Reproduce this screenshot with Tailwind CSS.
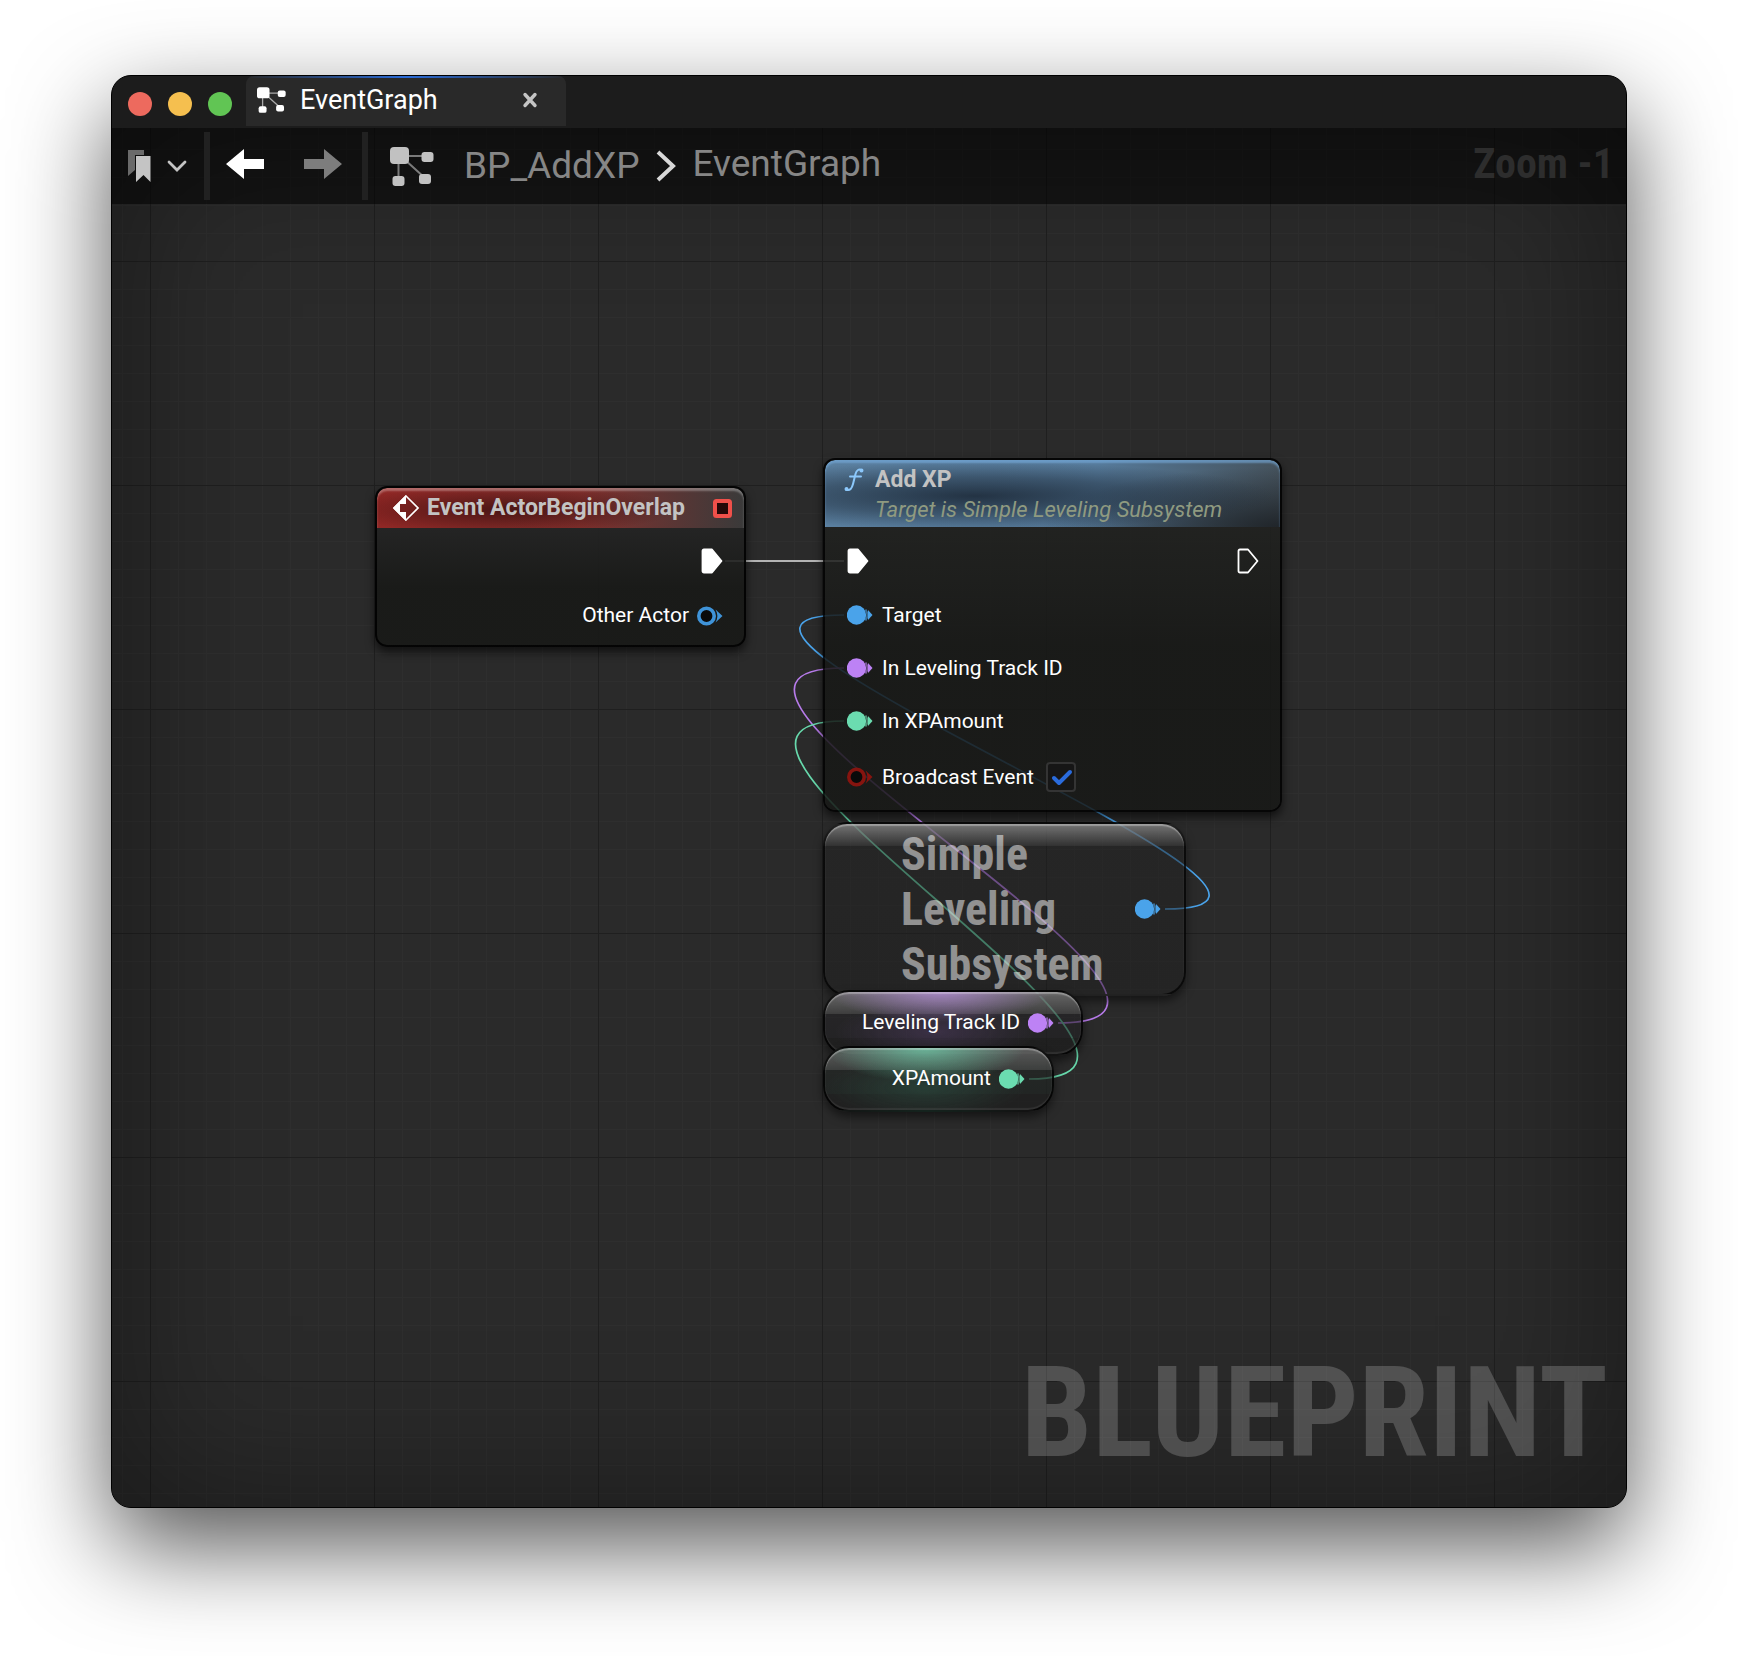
<!DOCTYPE html>
<html lang="en">
<head>
<meta charset="utf-8">
<title>EventGraph</title>
<script src="https://cdn.jsdelivr.net/npm/@tailwindcss/browser@4"></script>
</head>
<body class="bg-white font-[Roboto,sans-serif] text-white">
<!-- shared shapes -->
<svg class="hidden" aria-hidden="true">
  <symbol id="graph" viewBox="0 0 44 39">
    <path d="M12 9H36M8.500 12V32M14 12L35 31" stroke="currentColor" stroke-opacity=".6" stroke-width="2" fill="none"/>
    <rect x="0" y="0" width="19" height="17" rx="4" fill="currentColor"/>
    <rect x="31.500" y="5" width="12" height="10" rx="3" fill="currentColor"/>
    <rect x="2.500" y="29" width="12" height="10" rx="3" fill="currentColor"/>
    <rect x="29" y="27" width="12" height="10" rx="3" fill="currentColor"/>
  </symbol>
  <symbol id="pin" viewBox="0 0 26 20">
    <circle cx="9.500" cy="10" r="9.700" fill="currentColor"/>
    <path d="M18.500 4.500C21 8 21 12 18.500 15.500" stroke="currentColor" stroke-opacity=".6" stroke-width="2" fill="none"/>
    <path d="M21 5L25.500 10L21 15Z" fill="currentColor"/>
  </symbol>
  <symbol id="pin-open" viewBox="0 0 26 20">
    <circle cx="9.500" cy="10" r="7.700" fill="#0a0a0a" stroke="currentColor" stroke-width="3.600"/>
    <path d="M18.500 3.500L25.500 10L18.500 16.500C21 12 21 8 18.500 3.500Z" fill="currentColor"/>
  </symbol>
  <symbol id="exec" viewBox="0 0 22 26">
    <path d="M1.500 3Q1.500 1.500 3 1.500H11L20.500 13L11 24.500H3Q1.500 24.500 1.500 23Z" stroke="#fff" stroke-width="1.800" stroke-linejoin="round"/>
  </symbol>
</svg>

<div class="flex min-h-screen flex-col px-[111px] pt-[75px] pb-[148px]">
<main class="flex flex-1 flex-col overflow-hidden rounded-[20px] border border-black bg-[#1c1c1c] shadow-[0_38px_96px_rgba(0,0,0,0.67)]">

  <header class="flex h-[52px] items-start">
    <div class="flex gap-4 pt-4 pr-[14px] pl-4">
      <button aria-label="Close window" class="size-6 rounded-full bg-[#ed6a5e]"></button>
      <button aria-label="Minimise window" class="size-6 rounded-full bg-[#f5bf4f]"></button>
      <button aria-label="Zoom window" class="size-6 rounded-full bg-[#61c554]"></button>
    </div>
    <div class="flex h-[50px] w-[320px] flex-col rounded-t-lg bg-[#292929]">
      <div class="h-[2px] bg-[linear-gradient(to_right,transparent,#2a6bd8_50%,transparent)]"></div>
      <div class="flex flex-1 items-center pr-7 pb-1 pl-[11px]">
        <svg class="h-[26px] w-[29px]"><use href="#graph"/></svg>
        <a href="#" class="ml-[14px] flex-1 text-[27px] leading-8">EventGraph</a>
        <button aria-label="Close tab"><svg class="size-4" viewBox="0 0 16 16"><path d="M3 2.500L13 13.500M13 2.500L3 13.500" stroke="#c4c4c4" stroke-width="3.400" stroke-linecap="round"/></svg></button>
      </div>
    </div>
  </header>

  <section class="relative flex-1 bg-[#2a2a2a] bg-[linear-gradient(to_right,#1f1f1f_1px,transparent_1px),linear-gradient(to_bottom,#1f1f1f_1px,transparent_1px),linear-gradient(to_right,#2e2e2e_1px,transparent_1px),linear-gradient(to_bottom,#2e2e2e_1px,transparent_1px)] bg-[size:224px_224px,224px_224px,28px_28px,28px_28px] bg-[position:38px_133px,38px_133px,38px_133px,38px_133px]">
    <div class="pointer-events-none absolute inset-0 shadow-[inset_0_0_160px_rgba(0,0,0,0.42)]"></div>
    <p class="absolute right-[18px] bottom-7 font-['Roboto_Condensed','Liberation_Sans_Narrow',Roboto,sans-serif] text-[127px] leading-[132px] font-bold text-white/19">BLUEPRINT</p>

    <nav class="relative flex h-[76px] items-center bg-black/52">
      <button aria-label="Bookmarks" class="flex items-center gap-4 pl-4">
        <svg class="h-8 w-[23px]" viewBox="0 0 23 32"><path d="M0 0H16V5H7V20L0 26Z" fill="#6a6a6a"/><path d="M8 6H22.500V32L15.500 25L8 32Z" fill="#c4c4c4"/></svg>
        <svg class="h-3 w-5" viewBox="0 0 20 12"><path d="M2 2L10 10L18 2" stroke="#c4c4c4" stroke-width="2.800" fill="none" stroke-linecap="round"/></svg>
      </button>
      <span class="ml-[17px] h-[68px] w-[6px] bg-[#212121]"></span>
      <button aria-label="Back" class="ml-4 pb-1"><svg class="h-[30px] w-[38px]" viewBox="0 0 38 30"><path d="M0 15L18 0V10H38V20H18V30Z" fill="#fff"/></svg></button>
      <button aria-label="Forward" class="ml-10 pb-1"><svg class="h-[30px] w-[38px]" viewBox="0 0 38 30"><path d="M38 15L20 0V10H0V20H20V30Z" fill="#7d7d7d"/></svg></button>
      <span class="ml-5 h-[68px] w-[6px] bg-[#212121]"></span>
      <svg class="ml-[22px] h-[39px] w-11 text-[#c1c1c1]"><use href="#graph"/></svg>
      <a href="#" class="ml-[30px] text-[37px] leading-[44px] text-[#868686]">BP_AddXP</a>
      <svg class="ml-4 h-8 w-5" viewBox="0 0 20 32"><path d="M2 2L17 16L2 30" stroke="#d8d8d8" stroke-width="4" fill="none"/></svg>
      <a href="#" class="ml-[17px] flex-1 pb-1 text-[37px] leading-[44px] text-[#868686]">EventGraph</a>
      <span class="pr-3 pb-1 font-['Roboto_Condensed','Liberation_Sans_Narrow',Roboto,sans-serif] text-[42px] leading-[48px] font-bold text-[#2d2d2d]">Zoom -1</span>
    </nav>

    <!-- wires between pins -->
    <svg class="pointer-events-none absolute top-0 left-0 h-[1380px] w-[1500px]" viewBox="112 128 1500 1380" fill="none" stroke-width="1.700">
      <path d="M725 561H844" stroke="#b4b4b4" stroke-width="2"/>
      <path d="M1165 909C1400 909 609 615 844 615" stroke="#4aa3ea"/>
      <path d="M1058 1023C1292 1023 610 668 844 668" stroke="#b77bea"/>
      <path d="M1029 1079C1252 1079 621 721 844 721" stroke="#67d9ac"/>
    </svg>

    <!-- Event ActorBeginOverlap -->
    <article class="absolute top-[358px] left-[263px] w-[371px] overflow-hidden rounded-xl border-2 border-black/85 bg-[linear-gradient(rgb(36_36_36/0.9)_38px,rgb(24_25_23/0.9)_100px)] shadow-[0_5px_10px_rgba(0,0,0,0.6)]">
      <h2 class="flex h-10 items-center rounded-t-[10px] bg-[radial-gradient(ellipse_170px_24px_at_130px_22px,rgba(40,8,8,0.65),transparent),linear-gradient(to_right,#902725,#84302d_55%,#3a3a3a)] pr-3 pl-4 text-[23px] leading-8 font-bold text-[#c3c3c3] shadow-[inset_0_3px_2px_rgba(255,255,255,0.3)]">
        <svg class="size-[26px]" viewBox="0 0 26 26"><path d="M13 1L25 13L13 25L1 13Z" fill="none" stroke="#fff" stroke-width="1.600"/><path d="M13 0V9H7V17H13V26L0 13Z" fill="#fff"/></svg>
        <span class="ml-2 flex-1 whitespace-nowrap">Event ActorBeginOverlap</span>
        <svg class="size-[19px]" viewBox="0 0 19 19"><rect x="2" y="2" width="15" height="15" rx="1.500" fill="#260808" stroke="#f0504a" stroke-width="4"/></svg>
      </h2>
      <ul class="flex flex-col items-end pt-5 pr-[21px] pb-[15px]">
        <li class="flex h-[26px] items-center"><svg class="h-[26px] w-[22px]" fill="#fff"><use href="#exec"/></svg></li>
        <li class="mt-7 flex h-7 items-center gap-2 text-[21px]">Other Actor<svg class="h-5 w-[26px] text-[#3f93d8]"><use href="#pin-open"/></svg></li>
      </ul>
    </article>

    <!-- Add XP -->
    <article class="absolute top-[330px] left-[711px] w-[459px] overflow-hidden rounded-xl border-2 border-black/85 shadow-[0_5px_10px_rgba(0,0,0,0.6)]">
      <header class="h-[67px] rounded-t-[10px] bg-[radial-gradient(ellipse_300px_34px_at_150px_36px,rgba(26,38,52,0.85),rgba(26,38,52,0.45)_55%,transparent),radial-gradient(ellipse_240px_60px_at_457px_67px,rgba(28,32,36,0.9),transparent),linear-gradient(to_right,#5a7f9f,#567a9a_60%,#45525c)] pt-1 shadow-[inset_0_3px_2px_rgba(120,175,225,0.6)]">
        <div class="flex items-center pl-[19px]">
          <svg class="h-6 w-5" viewBox="0 0 20 24" fill="none" stroke="#8cc8fb" stroke-width="2" stroke-linecap="round"><path d="M2 21.500C6 23.500 8 20 9 16L11.500 6C12.500 2 15 0.500 18 2.500M6 8.500H17"/><circle cx="2.500" cy="21" r="1" fill="#8cc8fb"/><circle cx="17.500" cy="2.500" r="1" fill="#8cc8fb"/></svg>
          <h2 class="ml-[11px] text-[23px] leading-8 font-bold text-[#c3c3c3]">Add XP</h2>
        </div>
        <p class="pl-[50px] text-[22px] leading-7 whitespace-nowrap text-[#8f9a80] italic">Target is Simple Leveling Subsystem</p>
      </header>
      <ul class="flex flex-col bg-[linear-gradient(rgb(32_33_31/0.86),rgb(23_24_22/0.86)_120px)] pt-[21px] pr-[21px] pb-[18px] pl-[22px] text-[21px] leading-7">
        <li class="flex h-[26px] items-center justify-between"><svg class="h-[26px] w-[22px]" fill="#fff"><use href="#exec"/></svg><svg class="h-[26px] w-[22px]" fill="none"><use href="#exec"/></svg></li>
        <li class="mt-[27px] flex h-7 items-center gap-[9px]"><svg class="h-5 w-[26px] text-[#4aa3ea]"><use href="#pin"/></svg>Target</li>
        <li class="mt-[25px] flex h-7 items-center gap-[9px]"><svg class="h-5 w-[26px] text-[#bd82f5]"><use href="#pin"/></svg>In Leveling Track ID</li>
        <li class="mt-[25px] flex h-7 items-center gap-[9px]"><svg class="h-5 w-[26px] text-[#6bdcb0]"><use href="#pin"/></svg>In XPAmount</li>
        <li class="mt-[27px] flex h-[30px] items-center gap-[9px]"><svg class="h-5 w-[26px] text-[#86140f]"><use href="#pin-open"/></svg><label for="broadcast">Broadcast Event</label>
          <span class="ml-[3px] grid size-[30px]">
            <input id="broadcast" type="checkbox" checked class="col-start-1 row-start-1 size-[30px] appearance-none rounded border-2 border-[#343434] bg-[#161616]">
            <svg class="pointer-events-none col-start-1 row-start-1 size-[30px]" viewBox="0 0 30 30"><path d="M8 16L13 21L24 10" fill="none" stroke="#2a6bdd" stroke-width="4" stroke-linecap="round" stroke-linejoin="round"/></svg>
          </span>
        </li>
      </ul>
    </article>

    <!-- Simple Leveling Subsystem -->
    <article class="absolute top-[694px] left-[711px] flex h-[174px] w-[363px] items-center justify-between rounded-[24px] border-2 border-black/70 bg-[linear-gradient(rgb(125_125_125/0.9),rgb(55_55_55/0.6)_22px,rgb(33_33_33/0.5)_22px,rgb(30_30_30/0.5))] pr-[23px] pl-[76px] shadow-[inset_0_2px_1px_rgba(255,255,255,0.3),0_5px_10px_rgba(0,0,0,0.5)]">
      <h2 class="w-[210px] font-['Roboto_Condensed','Liberation_Sans_Narrow',Roboto,sans-serif] text-[46px] leading-[55px] font-bold text-white/50">Simple Leveling Subsystem</h2>
      <svg class="h-5 w-[26px] text-[#4aa3ea]"><use href="#pin"/></svg>
    </article>

    <!-- Leveling Track ID -->
    <article class="absolute top-[862px] left-[711px] flex h-[66px] w-[260px] items-center justify-end gap-2 rounded-[26px] border-2 border-black/80 bg-[radial-gradient(ellipse_110px_30px_at_115px_0px,rgba(190,145,230,0.7),transparent),radial-gradient(ellipse_100px_30px_at_110px_40px,rgba(80,60,100,0.5),transparent),linear-gradient(rgb(125_125_125/0.8),rgb(70_70_70/0.7)_22px,rgb(36_35_38/0.6)_22px,rgb(33_32_35/0.6)_46px,rgb(28_28_28/0.7)_46px)] pr-[27px] text-[21px] shadow-[inset_0_2px_1px_rgba(255,255,255,0.3),inset_0_-2px_1px_rgba(255,255,255,0.08),0_5px_10px_rgba(0,0,0,0.5)]">
      Leveling Track ID<svg class="h-5 w-[26px] text-[#bd82f5]"><use href="#pin"/></svg>
    </article>

    <!-- XPAmount -->
    <article class="absolute top-[918px] left-[711px] flex h-[66px] w-[231px] items-center justify-end gap-2 rounded-[26px] border-2 border-black/80 bg-[radial-gradient(ellipse_100px_34px_at_100px_0px,rgba(110,215,175,0.7),transparent),radial-gradient(ellipse_100px_30px_at_100px_40px,rgba(45,85,70,0.5),transparent),linear-gradient(rgb(110_110_110/0.8),rgb(65_68_66/0.8)_22px,rgb(34_38_36/0.7)_22px,rgb(31_36_34/0.7)_46px,rgb(30_30_30/0.8)_46px)] pr-[27px] text-[21px] shadow-[inset_0_2px_1px_rgba(255,255,255,0.3),inset_0_-2px_1px_rgba(255,255,255,0.08),0_5px_10px_rgba(0,0,0,0.5)]">
      XPAmount<svg class="h-5 w-[26px] text-[#6bdcb0]"><use href="#pin"/></svg>
    </article>
  </section>
</main>
</div>
</body>
</html>
